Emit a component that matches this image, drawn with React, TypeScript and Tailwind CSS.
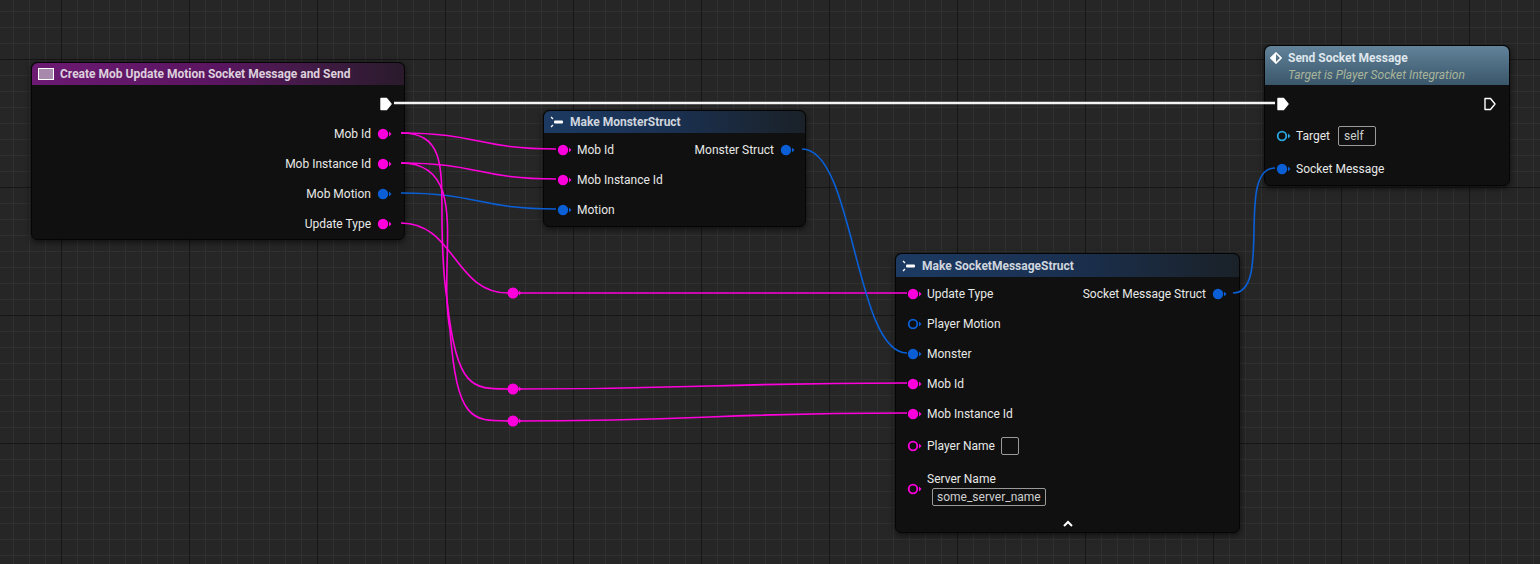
import React from "react";

const PINK = "#ff00dd";
const BLUE = "#0a5fd6";
const CYAN = "#2aa6e0";

function Pin({ color, hollow = false }: { color: string; hollow?: boolean }) {
  return (
    <svg width="16" height="12" viewBox="0 0 16 12" className="shrink-0">
      {hollow ? (
        <circle cx="6" cy="6" r="4.3" fill="none" stroke={color} strokeWidth="1.8" />
      ) : (
        <circle cx="6" cy="6" r="5.2" fill={color} />
      )}
      <path d="M12 3.5 L14.5 6 L12 8.5 Z" fill={color} />
    </svg>
  );
}

function Exec({ filled = true }: { filled?: boolean }) {
  return (
    <svg width="14" height="14" viewBox="0 0 14 14" className="shrink-0">
      <path
        d="M2 1.5 H7.5 L12 7 L7.5 12.5 H2 Z"
        fill={filled ? "#fff" : "none"}
        stroke="#fff"
        strokeWidth="1.4"
        strokeLinejoin="round"
      />
    </svg>
  );
}

function StructIcon() {
  return (
    <svg width="14" height="12" viewBox="0 0 14 12" className="shrink-0">
      <path d="M1 1 L3 3 M1 11 L3 9" stroke="#fff" strokeWidth="1.3" />
      <rect x="4" y="4.5" width="9" height="3" rx="1" fill="#fff" />
    </svg>
  );
}

function Wire({ x1, y1, x2, y2, color, w = 1.6 }: { x1: number; y1: number; x2: number; y2: number; color: string; w?: number }) {
  const d = Math.max(Math.abs(x2 - x1) * 0.5, 40);
  return (
    <path
      d={`M${x1} ${y1} C${x1 + d} ${y1} ${x2 - d} ${y2} ${x2} ${y2}`}
      fill="none"
      stroke={color}
      strokeWidth={w}
    />
  );
}

const body = "absolute rounded-md bg-[#0e0f0e]/95 border border-[#050505] shadow-[0_2px_6px_rgba(0,0,0,0.6)] text-[12px] text-[#e8e8e8]";

export default function App() {
  return (
    <div className="relative w-[1540px] h-[564px] overflow-hidden bg-[#262626]" style={{ fontFamily: "Roboto, 'Noto Sans', sans-serif" }}>
      <svg className="absolute inset-0" width="1540" height="564">
        <defs>
          <pattern id="minor" x="13" y="11" width="16" height="16" patternUnits="userSpaceOnUse">
            <path d="M0.5 0 V16 M0 0.5 H16" stroke="#303030" strokeWidth="1" />
          </pattern>
          <pattern id="major" x="61" y="59" width="128" height="128" patternUnits="userSpaceOnUse">
            <path d="M0.5 0 V128 M0 0.5 H128" stroke="#161616" strokeWidth="1" />
          </pattern>
        </defs>
        <rect width="1540" height="564" fill="url(#minor)" />
        <rect width="1540" height="564" fill="url(#major)" />
      </svg>

      {/* Node 1 */}
      <div className={`${body} left-[31px] top-[62px] w-[374px] h-[178px]`}>
        <div className="h-[22px] rounded-t-md bg-gradient-to-r from-[#6c1a72] via-[#5a1560] to-[#2a1a2c] flex items-center gap-1.5 px-1.5 font-bold text-[#dcd0dc]">
          <div className="w-[16px] h-[12px] border border-white bg-[#a78aab] shrink-0" />
          Create Mob Update Motion Socket Message and Send
        </div>
        <div className="flex flex-col items-end pr-[11px] pt-[8px]">
          <div className="h-[30px] -mt-[4px] flex items-center"><Exec /></div>
          {[
            ["Mob Id", PINK],
            ["Mob Instance Id", PINK],
            ["Mob Motion", BLUE],
            ["Update Type", PINK],
          ].map(([l, c]) => (
            <div key={l} className="h-[30px] flex items-center gap-[6px]">
              <span>{l}</span>
              <Pin color={c} />
            </div>
          ))}
        </div>
      </div>

      {/* Node 2 */}
      <div className={`${body} left-[543px] top-[110px] w-[263px] h-[117px]`}>
        <div className="h-[22px] rounded-t-md bg-gradient-to-r from-[#1c3a62] via-[#1a3050] to-[#1a2128] flex items-center gap-1.5 px-1.5 font-bold text-[#d0d6de]">
          <StructIcon />
          Make MonsterStruct
        </div>
        <div className="flex justify-between pl-[13px] pr-[9px] pt-[2px]">
          <div className="flex flex-col">
            {[["Mob Id", PINK], ["Mob Instance Id", PINK], ["Motion", BLUE]].map(([l, c]) => (
              <div key={l} className="h-[30px] flex items-center gap-[4px]"><Pin color={c} /><span>{l}</span></div>
            ))}
          </div>
          <div className="h-[30px] flex items-center gap-[6px]"><span>Monster Struct</span><Pin color={BLUE} /></div>
        </div>
      </div>

      {/* Node 3 */}
      <div className={`${body} left-[1264px] top-[45px] w-[246px] h-[141px]`}>
        <div className="h-[39px] rounded-t-md bg-gradient-to-b from-[#62839a] to-[#3a566a] px-[5px] pt-[3px]">
          <div className="flex items-center gap-1.5 font-bold text-[#dfe6ec]">
            <svg width="12" height="12" viewBox="0 0 12 12"><path d="M6 1 L11 6 L6 11 L1 6 Z" fill="none" stroke="#fff" strokeWidth="1.6" /><path d="M6 1 L1 6 L6 11 Z" fill="#fff" /></svg>
            Send Socket Message
          </div>
          <div className="italic text-[#a9b49a] pl-[18px] leading-[16px]">Target is Player Socket Integration</div>
        </div>
        <div className="flex justify-between items-center pl-[11px] pr-[12px] h-[38px]">
          <Exec />
          <Exec filled={false} />
        </div>
        <div className="flex flex-col pl-[11px]">
          <div className="h-[30px] flex items-center gap-[4px] -mt-[2px]">
            <Pin color={CYAN} hollow />
            <span>Target</span>
            <span className="ml-[4px] border border-[#9a9a9a] rounded-[2px] px-[5px] h-[20px] leading-[18px] text-[#cfcfcf] w-[38px]">self</span>
          </div>
          <div className="h-[30px] flex items-center gap-[4px] mt-[3px]">
            <Pin color={BLUE} />
            <span>Socket Message</span>
          </div>
        </div>
      </div>

      {/* Node 4 */}
      <div className={`${body} left-[895px] top-[253px] w-[345px] h-[280px]`}>
        <div className="h-[23px] rounded-t-md bg-gradient-to-r from-[#1c3a62] via-[#1a3050] to-[#1a2128] flex items-center gap-1.5 px-1.5 font-bold text-[#d0d6de]">
          <StructIcon />
          Make SocketMessageStruct
        </div>
        <div className="flex justify-between pl-[11px] pr-[11px] pt-[2px]">
          <div className="flex flex-col">
            {[
              ["Update Type", PINK, false],
              ["Player Motion", BLUE, true],
              ["Monster", BLUE, false],
              ["Mob Id", PINK, false],
              ["Mob Instance Id", PINK, false],
            ].map(([l, c, h]) => (
              <div key={l as string} className="h-[30px] flex items-center gap-[4px]">
                <Pin color={c as string} hollow={h as boolean} />
                <span>{l as string}</span>
              </div>
            ))}
            <div className="h-[34px] flex items-center gap-[4px]">
              <Pin color={PINK} hollow />
              <span>Player Name</span>
              <span className="ml-[2px] w-[18px] h-[18px] border border-[#9a9a9a] rounded-[2px]" />
            </div>
            <div className="flex items-center gap-[4px] mt-[9px]">
              <Pin color={PINK} hollow />
              <div className="flex flex-col">
                <span className="leading-[14px]">Server Name</span>
                <span className="mt-[2px] ml-[5px] border border-[#9a9a9a] rounded-[2px] px-[4px] h-[18px] leading-[16px] text-[#cfcfcf]">some_server_name</span>
              </div>
            </div>
          </div>
          <div className="h-[30px] flex items-center gap-[6px]"><span>Socket Message Struct</span><Pin color={BLUE} /></div>
        </div>
        <div className="flex justify-center mt-[14px]">
          <svg width="12" height="8" viewBox="0 0 12 8"><path d="M2 6 L6 2 L10 6" fill="none" stroke="#fff" strokeWidth="2" /></svg>
        </div>
      </div>

      {/* wires */}
      <svg className="absolute inset-0 pointer-events-none" width="1540" height="564">
        <line x1="394" y1="103" x2="1275" y2="103" stroke="#f4f4f4" strokeWidth="2.4" />
        <Wire x1={401} y1={133} x2={556} y2={149} color={PINK} />
        <Wire x1={401} y1={163} x2={556} y2={179} color={PINK} />
        <Wire x1={401} y1={193} x2={556} y2={209} color={BLUE} />
        <path d="M401 133 C462 133 432 200 447 300 C457 389 472 389 508 389" fill="none" stroke={PINK} strokeWidth="1.6" />
        <path d="M401 163 C472 163 437 260 450 330 C457 421 472 421 508 421" fill="none" stroke={PINK} strokeWidth="1.6" />
        <Wire x1={401} y1={223} x2={508} y2={293} color={PINK} />
        <line x1="513" y1="293" x2="907" y2="293" stroke={PINK} strokeWidth="1.6" />
        <Wire x1={513} y1={389} x2={907} y2={383} color={PINK} />
        <Wire x1={513} y1={421} x2={907} y2={413} color={PINK} />
        <Wire x1={802} y1={149} x2={907} y2={353} color={BLUE} />
        <Wire x1={1233} y1={293} x2={1275} y2={168} color={BLUE} />
        {[293, 389, 421].map((y) => (
          <g key={y}>
            <circle cx="513" cy={y} r="5.5" fill={PINK} />
            <path d={`M519 ${y - 2.5} L521.5 ${y} L519 ${y + 2.5} Z`} fill={PINK} />
          </g>
        ))}
      </svg>
    </div>
  );
}
